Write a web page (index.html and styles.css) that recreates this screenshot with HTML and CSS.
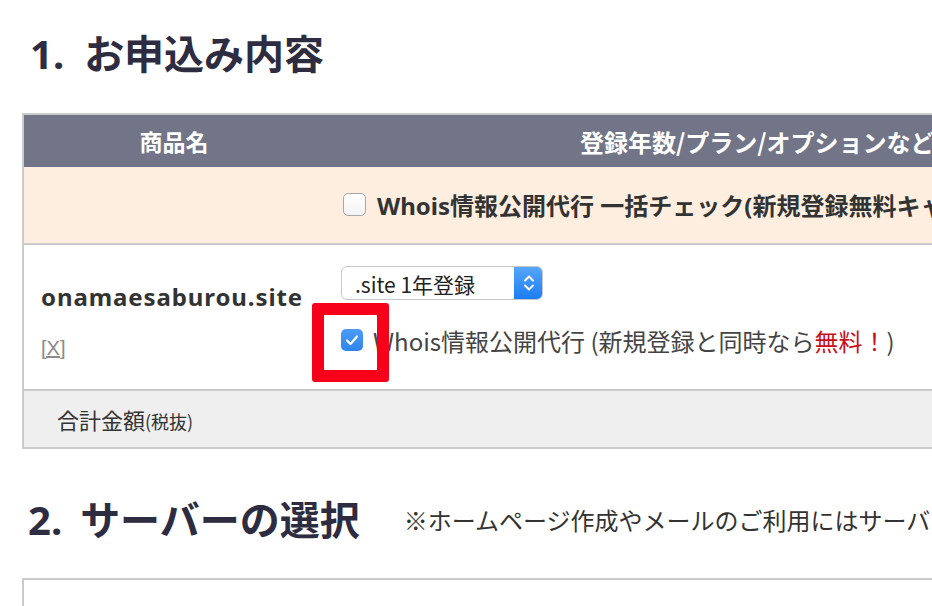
FILE: index.html
```html
<!DOCTYPE html>
<html lang="ja">
<head>
<meta charset="utf-8">
<title>お申込み内容</title>
<link rel="stylesheet" href="styles.css">
</head>
<body>
<div class="page">
  <h1 class="sec-title"><span class="num">1.</span>お申込み内容</h1>

  <div class="order-table">
    <div class="row head">
      <div class="cell c1">商品名</div>
      <div class="cell c2">登録年数/プラン/オプションなど</div>
    </div>
    <div class="row bulk">
      <span class="cbox"></span>
      <span class="bulk-text">Whois情報公開代行 一括チェック(新規登録無料キャンペーン中)</span>
    </div>
    <div class="row item">
      <div class="cell c1">
        <div class="domain">onamaesaburou.site</div>
        <a class="remove">[X]</a>
      </div>
      <div class="cell c2">
        <div class="select">
          <span class="select-label">.site 1年登録</span>
          <span class="select-btn">
            <svg width="14" height="22" viewBox="0 0 14 22"><path d="M3 8.5 L7 4.5 L11 8.5 M3 13.5 L7 17.5 L11 13.5" fill="none" stroke="#fff" stroke-width="2" stroke-linecap="round" stroke-linejoin="round"/></svg>
          </span>
        </div>
        <label class="option">
          <span class="cbox checked">
            <svg width="14" height="12" viewBox="0 0 14 12"><path d="M2 6.5 L5.5 10 L12 2.5" fill="none" stroke="#fff" stroke-width="2.2" stroke-linecap="round" stroke-linejoin="round"/></svg>
          </span>
          <span class="option-text">Whois情報公開代行 (新規登録と同時なら<em class="free">無料！</em>)</span>
        </label>
      </div>
    </div>
    <div class="row total">
      <span class="total-label">合計金額<small>(税抜)</small></span>
    </div>
  </div>

  <div class="sec2-head">
    <h2 class="sec-title"><span class="num">2.</span>サーバーの選択</h2>
    <p class="note">※ホームページ作成やメールのご利用にはサーバーのお申込みが必要です。</p>
  </div>

  <div class="server-table"></div>

  <div class="highlight"></div>
</div>
</body>
</html>
```

FILE: styles.css
```css
html, body {
  margin: 0;
  padding: 0;
  background: #fff;
  overflow: hidden;
}
body {
  font-family: "Noto Sans", "Noto Sans CJK JP", sans-serif;
  color: #333;
  width: 932px;
  height: 606px;
}
.page {
  position: relative;
  padding: 29px 0 0 22px;
  width: 1400px;
}
.sec-title {
  margin: 0;
  font-size: 40px;
  line-height: 46px;
  font-weight: 700;
  color: #2e2c40;
  font-family: "Noto Sans CJK JP", sans-serif;
  white-space: nowrap;
}
.sec-title .num {
  margin-left: 8px;
  margin-right: 20px;
  font-family: "Noto Sans", sans-serif;
}
.order-table {
  margin-top: 36px;
  width: 1300px;
  border: 2px solid #cbcbcb;
}
.row {
  display: flex;
}
.cell.c1 {
  width: 300px;
  flex: none;
}
.head {
  height: 52px;
  background: #727587;
  color: #fff;
  font-weight: 700;
  font-size: 23px;
  align-items: center;
  font-family: "Noto Sans CJK JP", sans-serif;
}
.head .c1 {
  text-align: center;
}
.head .c2 {
  padding-left: 256px;
  white-space: nowrap;
  font-size: 24px;
}
.bulk {
  background: #fdeee0;
  border-bottom: 2px solid #cbcbcb;
  align-items: center;
  padding-left: 319px;
  padding-bottom: 2px;
  box-sizing: border-box;
  height: 78px;
}
.bulk-text {
  font-size: 24px;
  font-weight: 700;
  color: #333;
  margin-left: 11px;
  white-space: nowrap;
}
.cbox {
  display: inline-flex;
  align-items: center;
  justify-content: center;
  width: 21px;
  height: 21px;
  border: 1px solid #a9a9a9;
  border-radius: 5px;
  background: linear-gradient(#fff, #f4f4f4);
  flex: none;
}
.cbox.checked {
  border: none;
  width: 22px;
  height: 22px;
  background: linear-gradient(#4b9cf6, #2f84ee);
}
.item {
  height: 144px;
  border-bottom: 2px solid #cbcbcb;
}
.item .c1 {
  padding: 37px 0 0 17px;
  box-sizing: border-box;
}
.domain {
  font-size: 24px;
  font-weight: 700;
  line-height: 30px;
  letter-spacing: 0.9px;
  color: #333;
  white-space: nowrap;
}
.remove {
  display: inline-block;
  margin-top: 23px;
  font-size: 20px;
  line-height: 26px;
  color: #8a8a8a;
  text-decoration: underline;
  font-family: "Liberation Sans", sans-serif;
}
.item .c2 {
  padding: 21px 0 0 17px;
}
.select {
  display: flex;
  width: 202px;
  height: 34px;
  box-sizing: border-box;
  border: 1px solid #c6c6c6;
  border-radius: 6px;
  overflow: hidden;
  background: #fff;
}
.select-label {
  flex: 1;
  font-size: 21px;
  line-height: 34px;
  padding-left: 13px;
  color: #222;
  white-space: nowrap;
  font-family: "Noto Sans CJK JP", sans-serif;
}
.select-btn {
  width: 29px;
  display: flex;
  align-items: center;
  justify-content: center;
  background: linear-gradient(#58a8fb, #1a7bf2);
  margin: -1px -1px -1px 0;
}
.option {
  display: flex;
  align-items: center;
  margin-top: 24px;
  height: 32px;
}
.option-text {
  margin-left: 10px;
  font-size: 24px;
  color: #444;
  white-space: nowrap;
  font-family: "Noto Sans CJK JP", sans-serif;
}
.free {
  font-style: normal;
  color: #c8101b;
}
.total {
  height: 56px;
  background: #efefef;
  align-items: center;
  padding-left: 33px;
}
.total-label {
  font-size: 22px;
  color: #333;
  font-family: "Noto Sans CJK JP", sans-serif;
}
.total-label small {
  font-size: 18px;
}
.sec2-head {
  display: flex;
  align-items: center;
  margin-top: 46px;
  gap: 44px;
}
.sec2-head .sec-title .num {
  margin-left: 6px;
  margin-right: 18px;
}
.note {
  margin: 0;
  font-size: 24px;
  color: #333;
  white-space: nowrap;
  font-family: "Noto Sans CJK JP", sans-serif;
}
.server-table {
  margin-top: 35px;
  width: 1300px;
  height: 60px;
  border: 2px solid #cbcbcb;
}
.highlight {
  position: absolute;
  left: 312px;
  top: 303px;
  width: 77px;
  height: 79px;
  box-sizing: border-box;
  border: 12px solid #f7001a;
  border-radius: 3px;
}
```
